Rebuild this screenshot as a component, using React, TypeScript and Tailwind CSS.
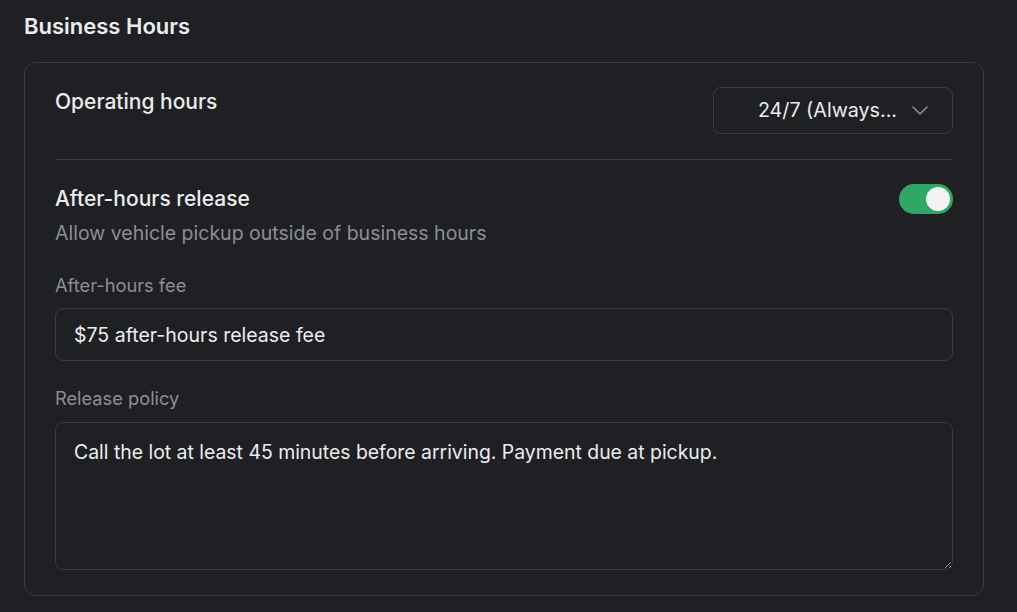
import { useEffect, useRef, useState } from "react";

function Toggle({ on, onChange }: { on: boolean; onChange: (v: boolean) => void }) {
  return (
    <button
      type="button"
      role="switch"
      aria-checked={on}
      onClick={() => onChange(!on)}
      className={`flex h-[30px] w-[54px] shrink-0 items-center rounded-full px-[3px] transition-colors ${
        on ? "bg-[#2fa866]" : "bg-[#3a3b40]"
      }`}
    >
      <span
        className={`h-6 w-6 rounded-full bg-[#f3f3f5] transition-transform ${on ? "translate-x-6" : "translate-x-0"}`}
      />
    </button>
  );
}

export default function App() {
  const [afterHours, setAfterHours] = useState(true);
  const [fee, setFee] = useState("$75 after-hours release fee");
  const [policy, setPolicy] = useState("Call the lot at least 45 minutes before arriving. Payment due at pickup.");
  const policyRef = useRef<HTMLTextAreaElement>(null);

  // put the caret at the end of the policy text
  useEffect(() => {
    const el = policyRef.current;
    if (el) {
      el.focus();
      el.setSelectionRange(el.value.length, el.value.length);
    }
  }, []);

  return (
    <div className="min-h-screen bg-[#1f2023] pl-6 pr-[33px] pt-[11px] pb-4 font-['Inter',sans-serif] text-[#ececee]">
      <h2 className="text-[22px] font-semibold leading-[30px]">Business Hours</h2>

      <div className="mt-[21px] rounded-xl border border-[#3b3c41] px-[30px] pt-6 pb-[25px]">
        <div className="flex items-start justify-between">
          <span className="mt-[2px] text-[21px] font-medium leading-[26px]">Operating hours</span>
          <button
            type="button"
            className="flex h-[47px] w-[240px] items-center justify-end gap-[15px] rounded-lg border border-[#3b3c41] pr-6 text-[19.7px]"
          >
            <span>24/7 (Always...</span>
            <svg width="16" height="9" viewBox="0 0 16 9" fill="none" stroke="#8d8e93" strokeWidth="1.6" strokeLinecap="round" strokeLinejoin="round">
              <path d="M1 1l7 7 7-7" />
            </svg>
          </button>
        </div>

        <div className="mt-[25px] h-px bg-[#3b3c41]" />

        <div className="mt-6 flex items-center justify-between">
          <span className="text-[21px] font-medium leading-7">After-hours release</span>
          <Toggle on={afterHours} onChange={setAfterHours} />
        </div>
        <p className="mt-[7px] text-[19.5px] leading-6 text-[#8d8e93]">Allow vehicle pickup outside of business hours</p>

        <label className="mt-[28px] block text-[18.25px] leading-6 text-[#8d8e93]">After-hours fee</label>
        <input
          value={fee}
          onChange={(e) => setFee(e.target.value)}
          className="mt-[11px] block h-[53px] w-full rounded-lg border border-[#3b3c41] bg-transparent px-[18px] text-[19.5px] text-[#ececee] outline-none"
        />

        <label className="mt-[25px] block text-[18.25px] leading-6 text-[#8d8e93]">Release policy</label>
        <textarea
          ref={policyRef}
          value={policy}
          onChange={(e) => setPolicy(e.target.value)}
          className="mt-[12px] block h-[148px] w-full rounded-lg border border-[#3b3c41] bg-transparent px-[18px] pt-4 text-[19.4px] leading-[26px] text-[#ececee] caret-[#ececee] outline-none focus:outline-none"
        />
      </div>
    </div>
  );
}
